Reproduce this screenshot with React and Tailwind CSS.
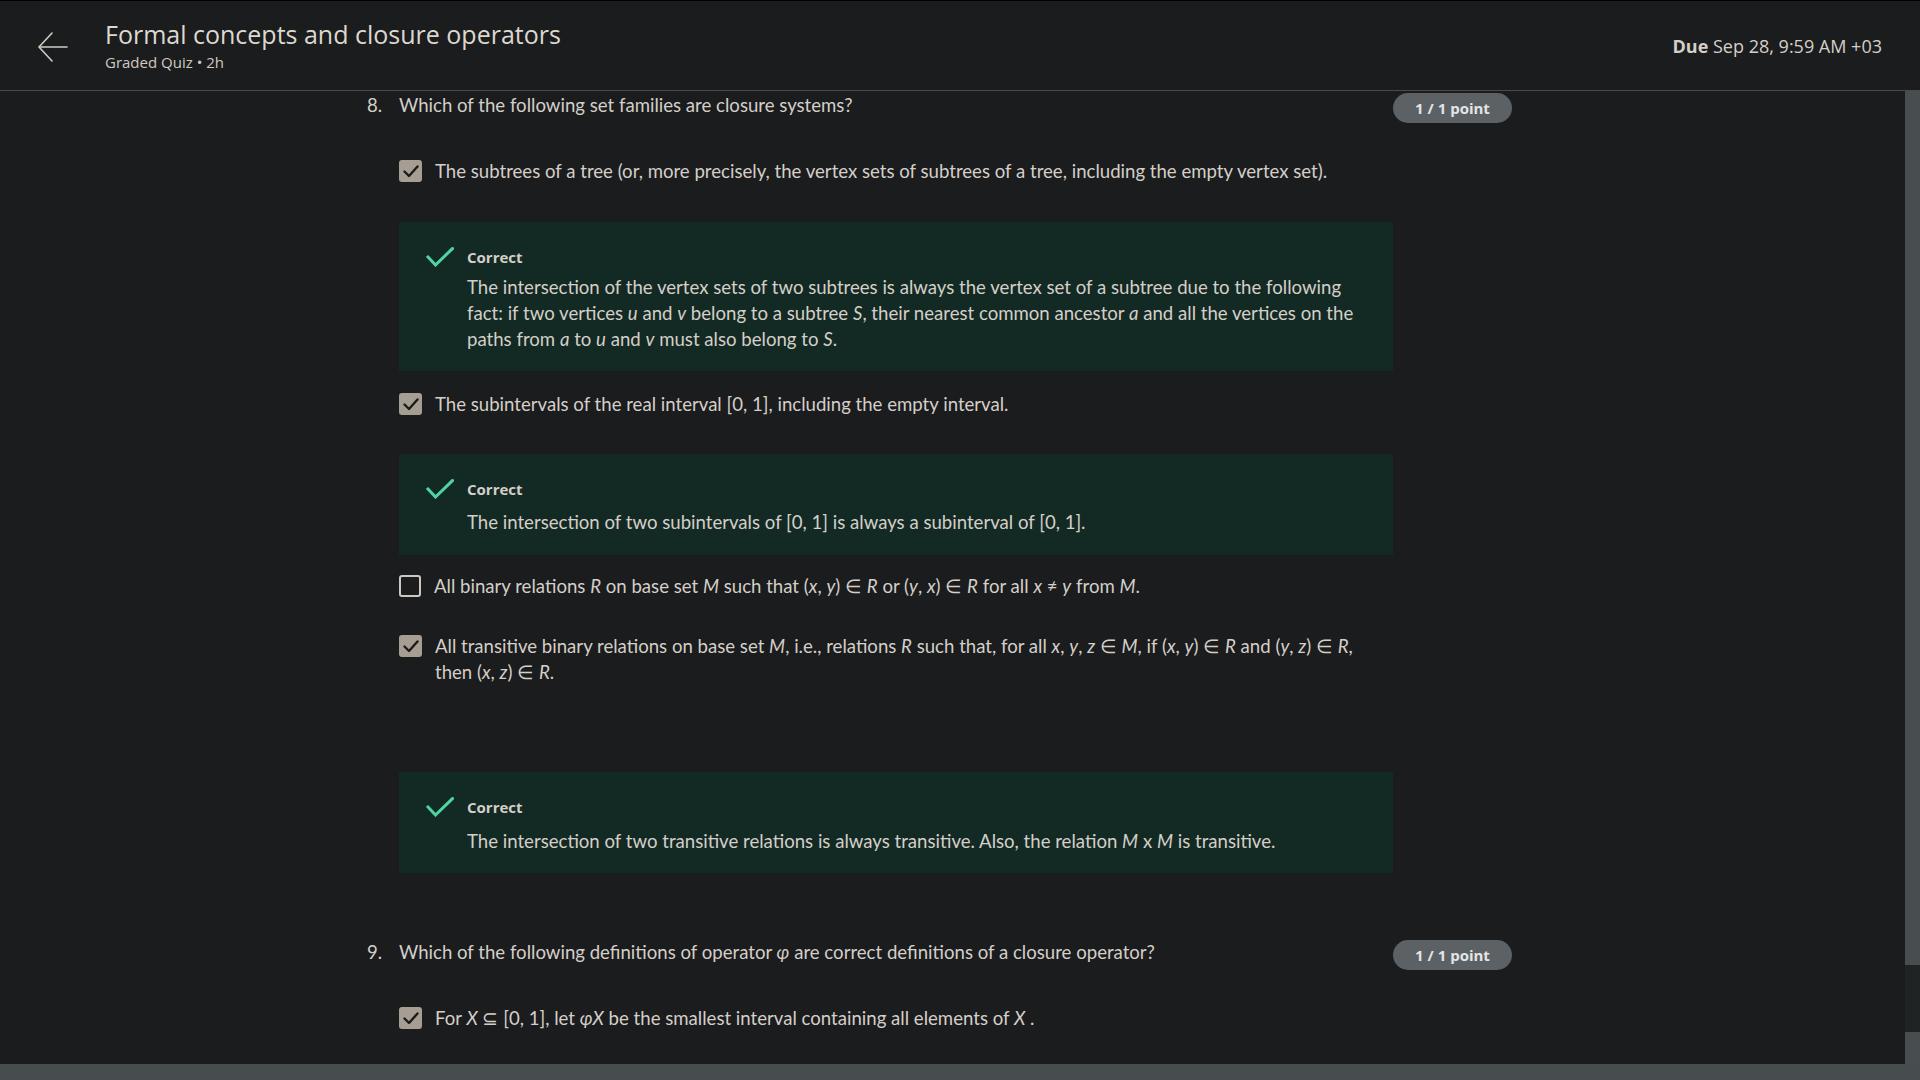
import React from "react";

const base = "font-['Open_Sans','Noto_Sans',sans-serif]";
const body = "font-['Lato','Open_Sans',sans-serif] text-[18.6px] leading-[26px] text-[#d4cfc8]";

function BackArrow() {
  return (
    <svg width="30" height="30" viewBox="0 0 30 30" fill="none" className="shrink-0">
      <path d="M29 15 H1.5" stroke="#cfcbc4" strokeWidth="1.6" strokeLinecap="round" />
      <path d="M14 1 L1 15 L14 29" stroke="#cfcbc4" strokeWidth="1.6" strokeLinecap="round" strokeLinejoin="round" />
    </svg>
  );
}

function CheckBox({ checked }) {
  if (!checked) {
    return <div className="w-[22px] h-[22px] mt-[2px] shrink-0 rounded-[3px] border-2 border-[#cdc8c0]" />;
  }
  return (
    <div className="w-[23px] h-[22px] mt-[2px] shrink-0 rounded-[3px] bg-[#a69e93] flex items-center justify-center">
      <svg width="16" height="13" viewBox="0 0 16 13" fill="none">
        <path d="M1.5 6.5 L6 11 L14.5 1.5" stroke="#1c1c1c" strokeWidth="2.4" strokeLinecap="round" strokeLinejoin="round" />
      </svg>
    </div>
  );
}

function GreenCheck() {
  return (
    <svg width="28" height="20" viewBox="0 0 28 20" fill="none" className="shrink-0">
      <path d="M2 10 L9.5 18 L26.5 1.5" stroke="#4fd4a2" strokeWidth="3" strokeLinecap="square" />
    </svg>
  );
}

function Option({ checked, children, className = "" }) {
  return (
    <div className={`flex gap-[13px] ${className}`}>
      <CheckBox checked={checked} />
      <div className={`${body} w-[931px]`}>{children}</div>
    </div>
  );
}

function Feedback({ children, className = "", bodyGap = "mt-[7px]", pb = "pb-[20px]" }) {
  return (
    <div className={`bg-[#132a24] w-[994px] pl-[27px] pr-[26px] pt-[25px] ${pb} flex gap-[13px] ${className}`}>
      <GreenCheck />
      <div className="flex-1">
        <div className={`${base} text-[15px] leading-[20px] font-bold text-[#d4cfc8]`}>Correct</div>
        <div className={`${body} ${bodyGap}`}>{children}</div>
      </div>
    </div>
  );
}

function QuestionHead({ num, children, className = "" }) {
  return (
    <div className={`flex items-start ${className}`}>
      <div className={`${body} w-[32px]`}>{num}</div>
      <div className={`${body} flex-1`}>{children}</div>
      <div className={`${base} mt-[1px] h-[30px] w-[119px] rounded-full bg-[#5b6164] flex items-center justify-center text-[15px] font-bold text-[#e4e4e4]`}>
        1 / 1 point
      </div>
    </div>
  );
}

export default function App() {
  return (
    <div className={`w-[1920px] h-[1080px] overflow-hidden bg-[#1b1c1e] flex flex-col ${base}`}>
      <header className="h-[91px] shrink-0 border-t border-black border-b border-b-[#4a4a4a] flex items-start">
        <div className="pl-[38px] pt-[31px]">
          <BackArrow />
        </div>
        <div className="pl-[37px] pt-[16px] flex flex-col">
          <div className="text-[25px] leading-[34px] text-[#ddd8d0]">Formal concepts and closure operators</div>
          <div className="text-[15px] leading-[20px] text-[#cfcac2] mt-[1px]">Graded Quiz • 2h</div>
        </div>
        <div className="ml-auto pr-[38px] pt-[32px] text-[18px] leading-[26px] text-[#d4cfc8]">
          <span className="font-bold">Due</span> Sep 28, 9:59 AM +03
        </div>
      </header>
      <div className="flex-1 flex min-h-0">
        <main className="flex-1 overflow-hidden pl-[367px] pt-[1px]">
          <section className="w-[1145px]">
            <QuestionHead num="8.">Which of the following set families are closure systems?</QuestionHead>
            <div className="ml-[32px]">
              <Option checked className="mt-[35px]">
                The subtrees of a tree (or, more precisely, the vertex sets of subtrees of a tree, including the empty vertex set).
              </Option>
              <Feedback className="mt-[38px]" bodyGap="mt-[7px]" pb="pb-[19px]">
                The intersection of the vertex sets of two subtrees is always the vertex set of a subtree due to the following fact: if two vertices <i>u</i> and <i>v</i> belong to a subtree <i>S</i>, their nearest common ancestor <i>a</i> and all the vertices on the paths from <i>a</i> to <i>u</i> and <i>v</i> must also belong to <i>S</i>.
              </Feedback>
              <Option checked className="mt-[20px]">
                The subintervals of the real interval [0, 1], including the empty interval.
              </Option>
              <Feedback className="mt-[37px]" bodyGap="mt-[10px]">
                The intersection of two subintervals of [0, 1] is always a subinterval of [0, 1].
              </Feedback>
              <Option checked={false} className="mt-[18px]">
                All binary relations <i>R</i> on base set <i>M</i> such that (<i>x</i>, <i>y</i>) ∈ <i>R</i> or (<i>y</i>, <i>x</i>) ∈ <i>R</i> for all <i>x</i> ≠ <i>y</i> from <i>M</i>.
              </Option>
              <Option checked className="mt-[34px]">
                All transitive binary relations on base set <i>M</i>, i.e., relations <i>R</i> such that, for all <i>x</i>, <i>y</i>, <i>z</i> ∈ <i>M</i>, if (<i>x</i>, <i>y</i>) ∈ <i>R</i> and (<i>y</i>, <i>z</i>) ∈ <i>R</i>, then (<i>x</i>, <i>z</i>) ∈ <i>R</i>.
              </Option>
              <Feedback className="mt-[87px]" bodyGap="mt-[11px]" pb="pb-[19px]">
                The intersection of two transitive relations is always transitive. Also, the relation <i>M</i> x <i>M</i> is transitive.
              </Feedback>
            </div>
            <QuestionHead num="9." className="mt-[66px]">
              Which of the following definitions of operator <i>φ</i> are correct definitions of a closure operator?
            </QuestionHead>
            <div className="ml-[32px]">
              <Option checked className="mt-[35px]">
                For <i>X</i> ⊆ [0, 1], let <i>φX</i> be the smallest interval containing all elements of <i>X</i> .
              </Option>
            </div>
          </section>
        </main>
        <div className="w-[15px] shrink-0 flex flex-col">
          <div className="h-[874px] bg-[#484d4f]" />
          <div className="h-[67px] bg-[#202324]" />
          <div className="flex-1 bg-[#484d4f]" />
        </div>
      </div>
      <div className="h-[16px] shrink-0 bg-[#474c4e]" />
    </div>
  );
}
